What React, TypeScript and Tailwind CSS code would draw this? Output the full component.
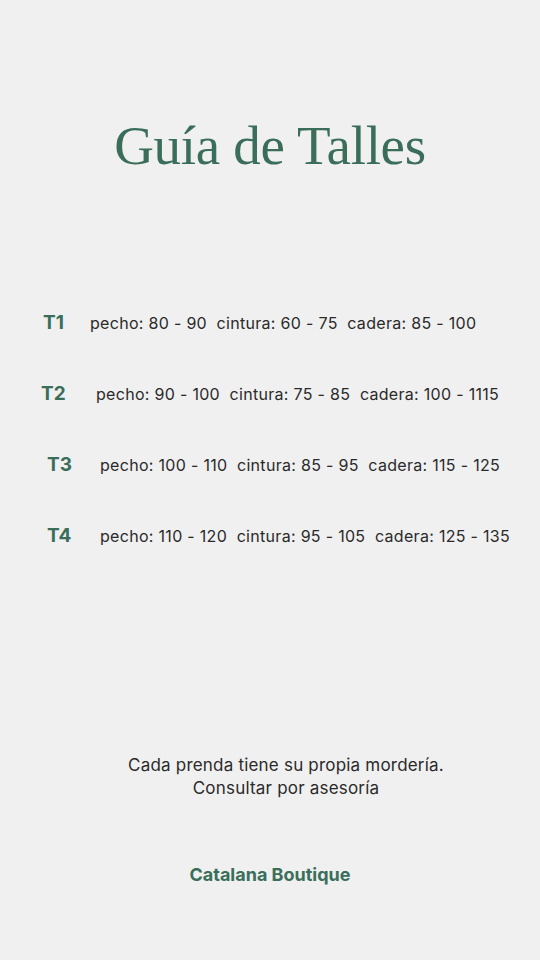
const rows = [
  { size: 'T1', text: 'pecho: 80 - 90  cintura: 60 - 75  cadera: 85 - 100', pad: 'pl-[43px]', gap: 'gap-[25px]' },
  { size: 'T2', text: 'pecho: 90 - 100  cintura: 75 - 85  cadera: 100 - 1115', pad: 'pl-[41px]', gap: 'gap-[33px]' },
  { size: 'T3', text: 'pecho: 100 - 110  cintura: 85 - 95  cadera: 115 - 125', pad: 'pl-[47px]', gap: 'gap-[31px]' },
  { size: 'T4', text: 'pecho: 110 - 120  cintura: 95 - 105  cadera: 125 - 135', pad: 'pl-[47px]', gap: 'gap-[31px]' },
]

export default function App() {
  return (
    <div className="w-[540px] h-[960px] bg-[#f0f0f0] flex flex-col font-['Inter',sans-serif] text-[#2a2a2a]">
      <h1 className="mt-[109px] text-center text-[55px] leading-[74px] tracking-[-0.3px] text-[#3a6e5a] font-['Liberation_Serif',serif]">
        Guía de Talles
      </h1>

      <div className="mt-[128px] flex flex-col gap-[47px]">
        {rows.map((r) => (
          <div key={r.size} className={`flex items-center h-[24px] ${r.pad} ${r.gap}`}>
            <span className="text-[19px] font-bold text-[#3a6e5a] w-[22px]">{r.size}</span>
            <span className="text-[16px] tracking-[0.3px] whitespace-pre">{r.text}</span>
          </div>
        ))}
      </div>

      <div className="mt-[206px] pl-[32px] text-center text-[17px] tracking-[0.2px] leading-[23px]">
        <p>Cada prenda tiene su propia mordería.</p>
        <p>Consultar por asesoría</p>
      </div>

      <p className="mt-[61px] text-center text-[18px] font-bold text-[#3a6e5a]">Catalana Boutique</p>
    </div>
  )
}
